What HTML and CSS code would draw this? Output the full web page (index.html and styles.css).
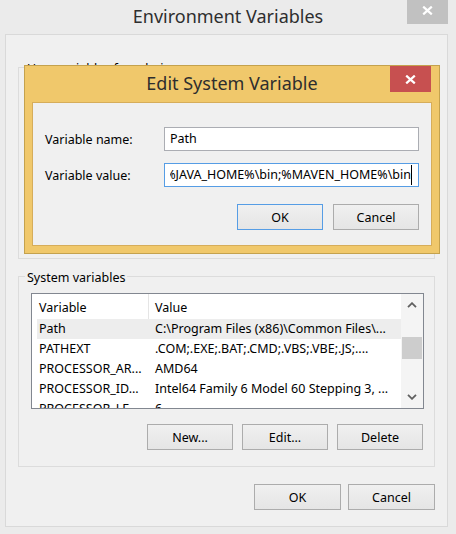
FILE: index.html
```html
<!DOCTYPE html>
<html>
<head>
<meta charset="utf-8">
<link rel="stylesheet" href="styles.css">
</head>
<body>
<div class="window">
  <div class="titlebar">
    <div class="title">Environment Variables</div>
    <div class="close close-inactive">
      <svg width="11" height="9" viewBox="0 0 11 9"><path d="M1.2 0.6 L9.8 8.4 M9.8 0.6 L1.2 8.4" stroke="#fff" stroke-width="2.2"/></svg>
    </div>
  </div>
  <div class="client">
    <div class="group group-user">
      <span class="group-label">User variables for admin</span>
    </div>
    <div class="group group-system">
      <span class="group-label">System variables</span>
      <div class="listview">
        <div class="lv-main">
          <div class="lv-header">
            <div class="hcol hcol1">Variable</div>
            <div class="hcol hcol2">Value</div>
          </div>
          <div class="lv-row selected"><div class="c1">Path</div><div class="c2">C:\Program Files (x86)\Common Files\...</div></div>
          <div class="lv-row"><div class="c1">PATHEXT</div><div class="c2">.COM;.EXE;.BAT;.CMD;.VBS;.VBE;.JS;....</div></div>
          <div class="lv-row"><div class="c1">PROCESSOR_AR...</div><div class="c2">AMD64</div></div>
          <div class="lv-row"><div class="c1">PROCESSOR_ID...</div><div class="c2">Intel64 Family 6 Model 60 Stepping 3, ...</div></div>
          <div class="lv-row"><div class="c1">PROCESSOR_LE...</div><div class="c2">6</div></div>
        </div>
        <div class="scrollbar">
          <div class="sb-btn">
            <svg width="10" height="6" viewBox="0 0 10 6"><path d="M1 5.2 L5 1.2 L9 5.2" fill="none" stroke="#606060" stroke-width="1.8"/></svg>
          </div>
          <div class="sb-track"><div class="sb-thumb"></div></div>
          <div class="sb-btn">
            <svg width="10" height="6" viewBox="0 0 10 6"><path d="M1 0.8 L5 4.8 L9 0.8" fill="none" stroke="#606060" stroke-width="1.8"/></svg>
          </div>
        </div>
      </div>
      <div class="btn-row group-btns">
        <button class="btn">New...</button>
        <button class="btn">Edit...</button>
        <button class="btn">Delete</button>
      </div>
    </div>
    <div class="btn-row main-btns">
      <button class="btn btn-main">OK</button>
      <button class="btn btn-main">Cancel</button>
    </div>
  </div>

  <div class="dialog">
    <div class="dlg-titlebar">
      <div class="dlg-title">Edit System Variable</div>
      <div class="close close-active">
        <svg width="11" height="9" viewBox="0 0 11 9"><path d="M1.2 0.6 L9.8 8.4 M9.8 0.6 L1.2 8.4" stroke="#fff" stroke-width="2.2"/></svg>
      </div>
    </div>
    <div class="dlg-panel">
      <div class="form">
        <label class="flabel">Variable name:</label>
        <div class="input"><span class="itext">Path</span></div>
        <label class="flabel">Variable value:</label>
        <div class="input focused"><div class="iclip"><span class="itext caret">%JAVA_HOME%\bin;%MAVEN_HOME%\bin</span></div></div>
      </div>
      <div class="btn-row dlg-btns">
        <button class="btn btn-dlg default">OK</button>
        <button class="btn btn-dlg">Cancel</button>
      </div>
    </div>
  </div>
</div>
</body>
</html>
```

FILE: styles.css
```css
* { box-sizing: border-box; }
html, body {
  margin: 0;
  padding: 0;
}
body {
  width: 456px;
  height: 534px;
  background: #ebebeb;
  font-family: "Noto Sans", "Open Sans", sans-serif;
  font-size: 12.5px;
  color: #000;
  overflow: hidden;
}
.window {
  position: relative;
  width: 456px;
  height: 534px;
  display: flex;
  flex-direction: column;
  background: #ebebeb;
}
.titlebar {
  height: 34px;
  flex: none;
  display: grid;
  grid-template-columns: 1fr auto 1fr;
}
.title {
  grid-column: 2;
  font-size: 18px;
  line-height: 24px;
  padding-top: 4px;
  color: #2e2e2e;
  white-space: nowrap;
}
.close {
  width: 41px;
  display: flex;
  align-items: center;
  justify-content: center;
}
.close-inactive {
  grid-column: 3;
  justify-self: end;
  align-self: start;
  height: 24px;
  margin-right: 8px;
  background: #c1c1c1;
  padding-bottom: 3px;
}
.close svg { display: block; }

.client {
  flex: 1;
  margin: 0 8px 7px 5px;
  border: 1px solid #d9d9d9;
  background: #f0f0f0;
  display: flex;
  flex-direction: column;
}
.group {
  border: 1px solid #dcdcdc;
  margin-left: 12px;
  margin-right: 12px;
  display: flex;
  flex-direction: column;
  flex: none;
}
.group-user {
  margin-top: 32px;
  height: 192px;
}
.group-system {
  margin-top: 17px;
  height: 191px;
}
.group-label {
  align-self: flex-start;
  margin-top: -7px;
  margin-left: 6px;
  padding: 0 2px;
  line-height: 16px;
  background: #f0f0f0;
  white-space: nowrap;
}

.listview {
  margin: 7px 10px 0 12px;
  height: 116px;
  border: 1px solid #828790;
  background: #fff;
  display: flex;
  overflow: hidden;
}
.lv-main {
  flex: 1;
  overflow: hidden;
}
.lv-header {
  height: 25px;
  display: grid;
  grid-template-columns: 117px 1fr;
  background: #fff;
}
.hcol {
  line-height: 23px;
  padding-top: 2px;
  white-space: nowrap;
}
.hcol1 {
  padding-left: 7px;
  border-right: 1px solid #e5e5e5;
}
.hcol2 { padding-left: 6px; }
.lv-row {
  height: 20px;
  margin-left: 5px;
  display: grid;
  grid-template-columns: 116px 1fr;
  line-height: 20px;
}
.lv-row.selected { background: #ededed; }
.c1, .c2 {
  padding-left: 2px;
  white-space: nowrap;
  overflow: hidden;
}
.scrollbar {
  width: 22px;
  flex: none;
  background: #f4f4f4;
  display: flex;
  flex-direction: column;
}
.sb-btn {
  height: 22px;
  flex: none;
  display: flex;
  align-items: center;
  justify-content: center;
}
.sb-btn svg { display: block; }
.sb-track {
  flex: 1;
  padding-top: 21px;
}
.sb-thumb {
  margin-left: 1px;
  width: 20px;
  height: 22px;
  background: #cdcdcd;
}

.btn-row {
  display: flex;
  justify-content: flex-end;
  flex: none;
}
.btn {
  font-family: "Noto Sans", "Open Sans", sans-serif;
  font-size: 12.5px;
  color: #000;
  height: 26px;
  padding: 0;
  border: 1px solid #acacac;
  background: linear-gradient(#f0f0f0, #e5e5e5);
  border-radius: 0;
}
.group-btns {
  margin-top: 15px;
  margin-right: 11px;
  gap: 9px;
}
.group-btns .btn { width: 86px; }
.main-btns {
  margin-top: 17px;
  margin-right: 12px;
  gap: 7px;
}
.btn-main { width: 87px; }

.dialog {
  position: absolute;
  left: 24px;
  top: 65px;
  width: 416px;
  height: 189px;
  border: 1px solid #c4a24e;
  background: #f0c86b;
  display: flex;
  flex-direction: column;
}
.dlg-titlebar {
  height: 36px;
  flex: none;
  display: grid;
  grid-template-columns: 1fr auto 1fr;
}
.dlg-title {
  grid-column: 2;
  font-size: 18px;
  line-height: 24px;
  padding-top: 5px;
  color: #2e2e2e;
  white-space: nowrap;
}
.close-active {
  grid-column: 3;
  justify-self: end;
  align-self: start;
  height: 26px;
  margin-right: 8px;
  background: #c75050;
}
.dlg-panel {
  flex: 1;
  margin: 0 7px 7px 7px;
  border: 1px solid #d6ad5a;
  background: #f0f0f0;
  padding: 24px 12px 14px 12px;
  display: flex;
  flex-direction: column;
}
.form {
  display: grid;
  grid-template-columns: 119px 255px;
  grid-auto-rows: 24px;
  row-gap: 12px;
}
.flabel {
  align-self: center;
  white-space: nowrap;
}
.input {
  border: 1px solid #abadb3;
  background: #fff;
  display: flex;
  align-items: center;
  overflow: hidden;
  padding: 0 5px;
}
.input.focused {
  border-color: #569de5;
  padding-right: 6px;
}
.iclip {
  flex: 1;
  min-width: 0;
  display: flex;
  justify-content: flex-end;
  overflow: hidden;
}
.itext {
  white-space: nowrap;
  flex: none;
  line-height: 20px;
}
.caret {
  border-right: 1px solid #000;
}
.dlg-btns {
  margin-top: 17px;
  gap: 10px;
}
.btn-dlg { width: 86px; }
.btn.default { border-color: #569de5; }
```
